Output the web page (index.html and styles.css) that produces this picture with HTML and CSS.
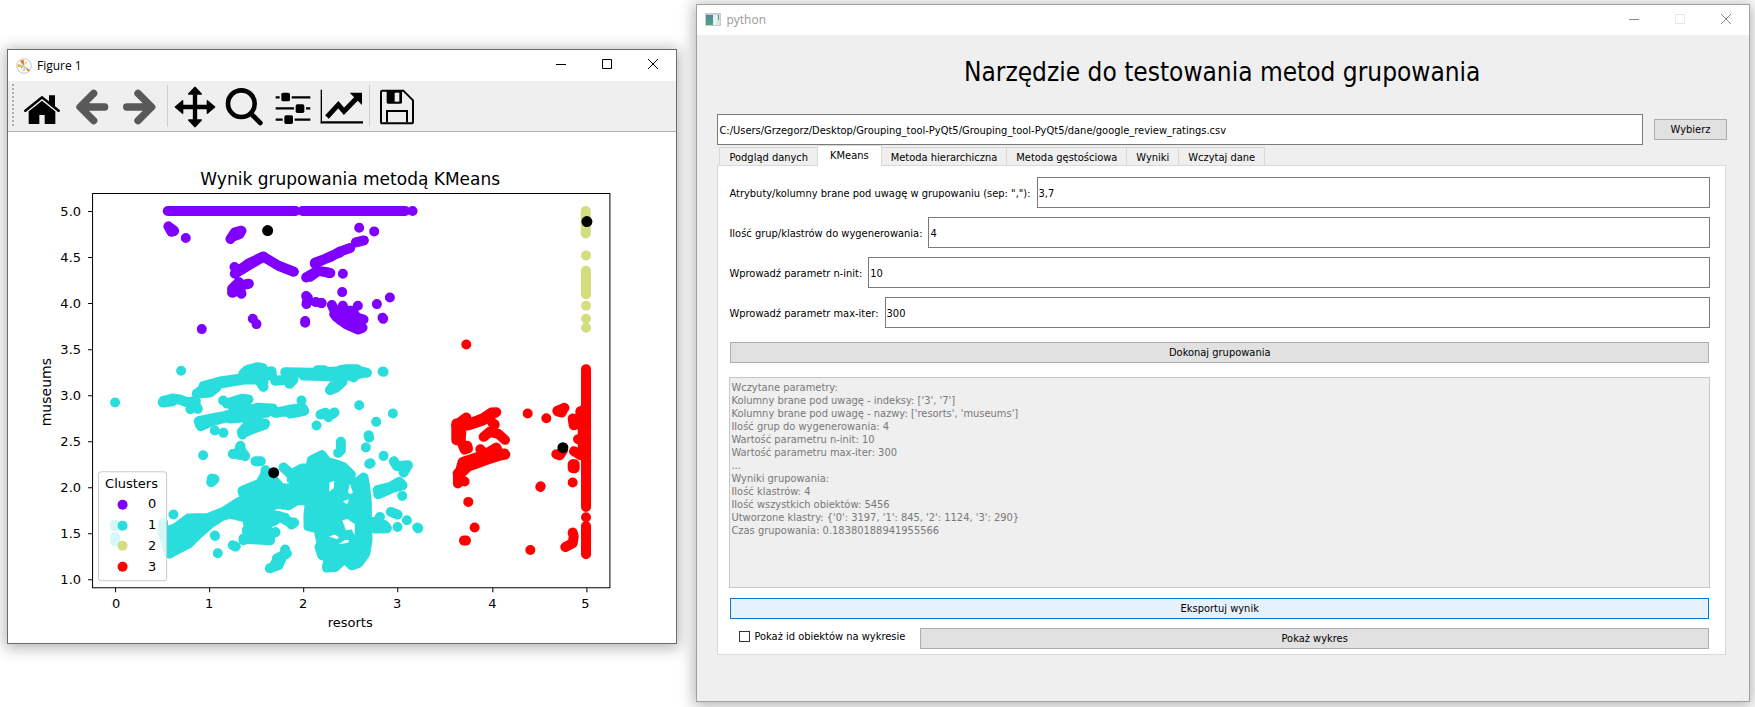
FILE: index.html
```html
<!DOCTYPE html>
<html lang="pl">
<head>
<meta charset="utf-8">
<title>Narzędzie do testowania metod grupowania</title>
<link rel="stylesheet" href="styles.css">
</head>
<body>
<main class="desktop">
  <section class="window figure-window">
    <header class="titlebar">
      <svg class="app-icon" viewBox="0 0 48 48" aria-hidden="true">
        <circle cx="24" cy="24" r="22" fill="#fff" stroke="#c4c8cc" stroke-width="3"/>
        <path d="M4 24h40M24 4v40M10 10l28 28M38 10L10 38" stroke="#dfe3e6" stroke-width="1.5"/>
        <path d="M24 24L12 8l11-3z" fill="#f0641e"/>
        <path d="M24 24L5 28l1-10z" fill="#f5b21a"/>
        <path d="M24 24l13 17 4-5z" fill="#ef6a26"/>
        <path d="M24 24l5-14 4 3z" fill="#b9d46a"/>
        <path d="M24 24l-2 14h5z" fill="#8cc79a"/>
        <path d="M24 24l-8 7-2-3z" fill="#4f9fa8"/>
      </svg>
      <span class="caption">Figure 1</span>
      <button class="control" aria-label="Minimize"><svg viewBox="0 0 10 10"><path d="M0 5.500h10"/></svg></button>
      <button class="control" aria-label="Maximize"><svg viewBox="0 0 10 10"><path d="M.5.5h9v9h-9z"/></svg></button>
      <button class="control" aria-label="Close"><svg viewBox="0 0 10 10"><path d="M0 0l10 10M10 0L0 10"/></svg></button>
    </header>
    <nav class="toolbar" aria-label="Figure tools">
      <span class="grip"></span>
      <button class="tool" aria-label="Home"><svg viewBox="54 123 147 150">
        <path d="M86 214l40-32 40 32v38h-32v-27h-16v27H86z"/>
        <path d="M76 212l50-40 50 40" fill="none" stroke="#efefef" stroke-width="14"/>
        <path d="M147 166h18v34l-18-14z"/>
        <path d="M76 212l50-40 50 40" fill="none" stroke="#000" stroke-width="8" stroke-linecap="round"/></svg></button>
      <button class="tool" aria-label="Back"><svg viewBox="201 123 147 150">
        <path d="M281 160l-41 41 41 41M246 201h68" fill="none" stroke="#595959" stroke-width="22" stroke-linecap="round" stroke-linejoin="round"/></svg></button>
      <button class="tool" aria-label="Forward"><svg viewBox="348 123 147 150">
        <path d="M414 160l41 41-41 41M449 201h-69" fill="none" stroke="#595959" stroke-width="22" stroke-linecap="round" stroke-linejoin="round"/></svg></button>
      <span class="divider"></span>
      <button class="tool" aria-label="Pan"><svg viewBox="513 123 147 150">
        <path d="M585 150v102M536 201h98" fill="none" stroke="#000" stroke-width="13"/>
        <path d="M585 142l19 20h-38zM585 260l19-20h-38zM526 201l22-19v38zM644 201l-22-19v38z" stroke="#000" stroke-width="4" stroke-linejoin="round"/></svg></button>
      <button class="tool" aria-label="Zoom"><svg viewBox="660 123 147 150">
        <circle cx="724" cy="191" r="40" fill="none" stroke="#000" stroke-width="14"/>
        <path d="M754 222l27 27" stroke="#000" stroke-width="14" stroke-linecap="round"/></svg></button>
      <button class="tool" aria-label="Configure subplots"><svg viewBox="807 123 147 150">
        <path d="M827 172h104M827 205h104M827 239h104" stroke="#000" stroke-width="7"/>
        <path d="M839 171h36M882 206h36M848 239h36" stroke="#efefef" stroke-width="12"/>
        <rect x="844" y="158" width="26" height="26" rx="5"/><rect x="887" y="193" width="26" height="26" rx="5"/><rect x="853" y="226" width="26" height="26" rx="5"/></svg></button>
      <button class="tool" aria-label="Edit curves"><svg viewBox="954 123 147 150">
        <path d="M964 149v101" stroke="#000" stroke-width="4"/><path d="M962 247h127" stroke="#000" stroke-width="7"/>
        <path d="M981 231l34-37 17 20 41-42" fill="none" stroke="#000" stroke-width="15"/>
        <path d="M1049 158h37v37z"/></svg></button>
      <span class="divider"></span>
      <button class="tool" aria-label="Save"><svg viewBox="1119 123 147 150">
        <path d="M1147 152h63l29 29v64q0 5-5 5h-87q-4 0-4-5v-89q0-4 4-4z" fill="none" stroke="#000" stroke-width="6"/>
        <path d="M1160 152h46v35q0 4-4 4h-38q-4 0-4-4z"/>
        <path d="M1184 158h14v27h-14z" fill="#efefef"/>
        <path d="M1161 247v-34h60v34" fill="none" stroke="#000" stroke-width="6"/></svg></button>
    </nav>
    <svg class="plot" viewBox="8 132 668 511" role="img" aria-label="Wynik grupowania metodą KMeans">
      <!-- cluster 0 -->
      <g class="c0" transform="translate(30 160) scale(.3333)">
        <path d="M413 153H796M817 153H1125M1147 153h0M415 199l17 13-8 3zM420 205l12 8M467 234h0M601 237l13-20 20-5-6 10-20 8M614 341l41-25 45-26 45 27 46 18M620 336l35-26 45-21M613 321h0M606 398v-12l20-20 5 10 25-5M634 401l-8-25-16 16 20 0M606 398l25-10M828 352l34-20 25 4 13 3M854 308l46-17 30-17 30-10M840 350l22-16M854 311l46-22 30-12M828 408l5 5-4 19M857 426h0M874 429h0M825 483v5M515 507h0M668 476h0M679 492h0"/>
        <path d="M987 203h0M1032 214h0M977 247l24-6M884 335l16 4M938 341h0M936 396h0M874 429h0M905 435h0M938 437h0M983 437h0M1040 432h0M1079 412h0M1057 473l2 3M912 462l15-12 38 2 15 20 20 6M915 466l40 12 42 25-14 5-35-16-30-22M930 480l53 28M938 437v20M905 435l10 20"/>
      </g>
      <!-- cluster 1 -->
      <g class="c1" transform="translate(30 340) scale(.3333)">
        <path d="M255 187h0M453 92h0M398 187l30-12 20 3 25 9 24-5M400 182l28-7M400 187l28-4M481 207h0M503 206l-12-20M500 160l40-3 20-17M505 157l25-17M520 138l50-14 70-10M525 142l45-12 70-12 60 0M640 100l15-12 28-7 15 3-10 30 30-20M635 110l90-5-1-12M650 90l50 35M685 118l15 22M735 122l30-3 15-5M778 131l12-13M765 96l85 2 70-4 60-3 30 7M820 106l100 3 50-4 35-8M862 90h20M930 90l20-3 30 0M970 112h0M937 125l-20 18-17 6 15-20"/>
        <path d="M579 181h0M590 190l45-14 20 2-20 15-30 3 30 25M510 255l-4-12 39-8 40-8 40-12M512 258l30-14 58-15M600 235l60-5 65-20 15 8M620 213l60-8 48 0M600 225l90-22 20 15M680 203l45 2M735 218l45-10 38-4 4 8-42 8M760 215h40M814 181h0M554 271h0M580 278h0M637 283l-2-8 20-23 20-15 28 17-30 10-35 15M655 235v25h25M705 250l-20 10M871 223l14-5 10 13 0-9M885 218l10 12M913 217l-15 10M859 256h0M900 150h0M1057 94l3 1"/>
        <path d="M519 345h0M608 341l17-5 6-19M645 348l-14-20-8 15 20 3M676 363h16M706 390v20l20 10M760 382l20 18 25-5M545 415l8 2-10 9M430 523h0M554 586l1 1M563 639h0M608 615l9 4M736 576h0M987 195h0M1088 220h0M1038 245h0M1015 285l2 7M1007 322h0M932 305v25l-8 8M1060 347h0M1017 371l4-2M1091 363l9 15 33-3-13 22M1042 450l40-10 25-15 10 10-30 8-43 19M1055 450l50-20M1116 467h0M1082 515l20 8M1130 540h0M1102 560h0M1161 562l3 2M1049 530l-14 35 35-1-8-10M1035 565l-5-20"/>
        <path class="mass" d="M405 575L440 562L475 535L535 533L580 515L620 490L645 475L637 452L690 430L707 400L730 420L752 443L785 445L785 402L815 385L840 385L845 360L875 345L890 365L915 372L938 380L962 403L957 425L977 450L985 425L1000 412L1005 440L1010 490L1010 540L1012 600L1005 640L985 668L965 675L945 655L925 670L915 680L890 682L895 660L880 635L872 600L865 565L835 558L835 520L840 480L800 480L775 495L740 490L690 515L640 530L600 520L575 527L540 550L500 585L475 610L440 628L418 640L405 600Z"/>
        <path d="M650 530l60-8 35 5 30 17 17 3-8 6M700 518l65 15M640 600l18-25-5-30 60-10-5 65M640 595l80 5-35-40 50-20M660 595l55-55M650 570l60 15M690 595v-60M705 590l30-14M675 550v40M719 684l25-9 20-39 6 4-30 15M745 675l-10-5M765 628v15M868 620l8 25 20 5"/>
        <path class="hole" d="M750 402l9 18 20 8-14 2-16-14zM898 427l14-5-1 22-14 10zM938 483l18-6-5 15zM936 540l16-4 22 16-1 34-8-18-18 2-4-12zM896 589l18-6 12 8-5 6zM926 611l18-12 12 0-2 8-20 4zM953 456l6-26 9 26-7 6z"/>
        <path d="M255 553v6M255 590v13M397 575l20 55M399 548v20"/>
      </g>
      <!-- cluster 2 -->
      <g class="c2" transform="translate(320 160) scale(.3333)">
        <path d="M796 153v67M797 286h0M797 332v71M797 437h0M797 476h0M797 503h0"/>
      </g>
      <!-- cluster 3 -->
      <g class="c3" transform="translate(320 340) scale(.3333)">
        <path d="M438 13h0M407 255l31-23 5 20 45-18 25-17 15-1-30 14-50 22-40-2M408 300v-45l15 20-2 25 12 28 10-3-2-8M415 270v30M408 262l42-8 40-14 30-20M523 252h0M516 248l7 6M490 290l18-15 26 6 20 18M480 327l15 15 33-20 10 20 15-2M427 365l45-15 20-8 60 0-50 16-60 22-20 20-3-5zM412 400l20-20M413 402v28M433 424h0M440 375l60-19M525 335v15M420 388l60-30 75-15M444 485h0M463 562h0M431 601h6M630 629h0M660 440l1-2M622 220h0M678 234h0M711 212l21-9M712 214l12 3 6-12M708 342l10 3 10-15M757 235l3 20 15-5M780 213v35M773 297h20M761 333l20 12 16-10M757 372l6 12 0-12M757 384v-12M757 427h0M735 620l22-11 3-20-3-12M797 87v413M797 500h0M797 531h0M797 557v85M787 210v135"/>
      </g>
      <!-- centroids -->
      <g class="centroids">
        <circle cx="267.500" cy="230.500" r="5.500"/><circle cx="586.500" cy="221.500" r="5.500"/>
        <circle cx="273.500" cy="472.500" r="5.500"/><circle cx="562.500" cy="447.500" r="5.500"/>
      </g>
      <!-- axes -->
      <path class="axes" d="M92.500 193.500h517v394h-517zM88 211.500h4M88 257.500h4M88 303.500h4M88 349.500h4M88 395.500h4M88 441.500h4M88 487.500h4M88 533.500h4M88 579.500h4M115.500 588v4M209.500 588v4M303.500 588v4M397.500 588v4M492.500 588v4M586.500 588v4"/>
      <text class="plot-title" x="350" y="185">Wynik grupowania metodą KMeans</text>
      <g class="ticks-y">
        <text x="81" y="216">5.0</text><text x="81" y="262">4.5</text><text x="81" y="308">4.0</text>
        <text x="81" y="354">3.5</text><text x="81" y="400">3.0</text><text x="81" y="446">2.5</text>
        <text x="81" y="492">2.0</text><text x="81" y="538">1.5</text><text x="81" y="584">1.0</text>
      </g>
      <g class="ticks-x">
        <text x="116" y="608">0</text><text x="209" y="608">1</text><text x="303" y="608">2</text>
        <text x="397" y="608">3</text><text x="492" y="608">4</text><text x="585" y="608">5</text>
        <text x="350" y="627">resorts</text>
        <text class="axis-name" transform="translate(51 392) rotate(-90)">museums</text>
      </g>
      <g class="legend">
        <rect x="98.500" y="471.500" width="68" height="109" rx="3"/>
        <text x="105" y="488">Clusters</text>
        <circle cx="122.500" cy="504.500" r="5" fill="#8000ff"/><text x="148" y="508">0</text>
        <circle cx="122.500" cy="525.500" r="5" fill="#2adddd"/><text x="148" y="529">1</text>
        <circle cx="122.500" cy="545.500" r="5" fill="#d4dd80"/><text x="148" y="550">2</text>
        <circle cx="122.500" cy="566.500" r="5" fill="#ff0000"/><text x="148" y="571">3</text>
      </g>
    </svg>
  </section>

  <section class="window app-window">
    <header class="titlebar">
      <svg class="app-icon" viewBox="0 0 16 16" aria-hidden="true">
        <defs><linearGradient id="pane" x1="0" y1="0" x2="0" y2="1"><stop offset="0" stop-color="#4c86a5"/><stop offset="1" stop-color="#4fa876"/></linearGradient></defs>
        <path d="M0 1h16v13H0z" fill="#c5ccd0"/><path d="M1 3h7v10H1z" fill="url(#pane)"/>
        <path d="M8 3h4v10H8z" fill="#eceff0"/><path d="M12 3h3v10h-3z" fill="#dde2e3"/><path d="M13 3h1v5h-1z" fill="#4d9693"/>
      </svg>
      <span class="caption">python</span>
      <button class="control" aria-label="Minimalizuj"><svg viewBox="0 0 10 10"><path d="M0 5.500h10"/></svg></button>
      <button class="control" aria-label="Maksymalizuj" disabled><svg viewBox="0 0 10 10"><path d="M.5.5h9v9h-9z"/></svg></button>
      <button class="control" aria-label="Zamknij"><svg viewBox="0 0 10 10"><path d="M0 0l10 10M10 0L0 10"/></svg></button>
    </header>
    <div class="content">
      <h1>Narzędzie do testowania metod grupowania</h1>
      <div class="file-row">
        <input class="field" type="text" aria-label="Plik z danymi" value="C:/Users/Grzegorz/Desktop/Grouping_tool-PyQt5/Grouping_tool-PyQt5/dane/google_review_ratings.csv">
        <button class="button choose">Wybierz</button>
      </div>
      <div class="tabs" role="tablist">
        <button class="tab" role="tab">Podgląd danych</button>
        <button class="tab selected" role="tab" aria-selected="true">KMeans</button>
        <button class="tab" role="tab">Metoda hierarchiczna</button>
        <button class="tab" role="tab">Metoda gęstościowa</button>
        <button class="tab" role="tab">Wyniki</button>
        <button class="tab" role="tab">Wczytaj dane</button>
      </div>
      <div class="panel" role="tabpanel">
        <div class="form-row"><label for="attrs">Atrybuty/kolumny brane pod uwagę w grupowaniu (sep: ","):</label><input class="field" id="attrs" type="text" value="3,7"></div>
        <div class="form-row"><label for="groups">Ilość grup/klastrów do wygenerowania:</label><input class="field" id="groups" type="text" value="4"></div>
        <div class="form-row"><label for="ninit">Wprowadź parametr n-init:</label><input class="field" id="ninit" type="text" value="10"></div>
        <div class="form-row"><label for="maxiter">Wprowadź parametr max-iter:</label><input class="field" id="maxiter" type="text" value="300"></div>
        <button class="button run">Dokonaj grupowania</button>
        <textarea class="log" aria-label="Wyniki grupowania" rows="16" disabled>Wczytane parametry:
Kolumny brane pod uwagę - indeksy: ['3', '7']
Kolumny brane pod uwagę - nazwy: ['resorts', 'museums']
Ilość grup do wygenerowania: 4
Wartość parametru n-init: 10
Wartość parametru max-iter: 300
...
Wyniki grupowania:
Ilość klastrów: 4
Ilość wszystkich obiektów: 5456
Utworzone klastry: {'0': 3197, '1': 845, '2': 1124, '3': 290}
Czas grupowania: 0.18380188941955566</textarea>
        <button class="button export">Eksportuj wynik</button>
        <div class="show-row">
          <label class="check"><input type="checkbox">Pokaż id obiektów na wykresie</label>
          <button class="button">Pokaż wykres</button>
        </div>
      </div>
    </div>
  </section>
</main>
</body>
</html>
```
FILE: styles.css
```css
* { box-sizing: border-box; }
body {
  margin: 0;
  background: #fff;
  color: #000;
  font: 11px/13px "DejaVu Sans Condensed", "Noto Sans", sans-serif;
}
button, input, textarea { font: inherit; color: inherit; margin: 0; }
button { padding: 0; border: 0; background: none; }

.desktop {
  display: flex;
  align-items: flex-start;
  gap: 19px;
  min-height: 100vh;
  padding: 4px 5px 5px 7px;
}
.window { min-width: 0; border: 1px solid #6b6b6b; background: #fff; box-shadow: 0 2px 14px 2px rgba(0, 0, 0, .3); }
.figure-window { flex: 670 1 0; margin-top: 45px; }
.app-window { flex: 1054 1 0; border-color: #a0a0a0; background: #efefef; }

.titlebar { display: flex; align-items: center; height: 31px; padding-left: 8px; background: #fff; }
.app-icon { width: 16px; height: 16px; }
.caption { flex: 1; padding-left: 5px; font: 12px/16px "Open Sans", sans-serif; }
.control { width: 46px; height: 30px; }
.control svg { width: 10px; height: 10px; fill: none; stroke: #000; }
.app-window .titlebar { height: 30px; color: #999; }
.app-window .control svg { stroke: #888; }
.app-window .control:disabled svg { stroke: #e6e6e6; }

.toolbar { display: flex; height: 51px; border-bottom: 1px solid #b4b4b4; background: #efefef; }
.grip { width: 2px; margin: 3px 4px; background: repeating-linear-gradient(#b0b0b0 0 2px, #efefef 2px 4px); }
.divider { width: 1px; margin: 4px 3px 4px 2px; background: #cfcfcf; }
.tool { width: 49px; height: 50px; }
.tool svg { display: block; width: 49px; height: 50px; }

.plot { display: block; width: 100%; font: 14px "DejaVu Sans", sans-serif; }
.plot path { fill: none; stroke-linecap: round; stroke-linejoin: round; }
.c0, .c1, .c2, .c3 { stroke-width: 30; }
.c0 { stroke: #8000ff; }
.c1 { stroke: #2adddd; }
.c2 { stroke: #d4dd80; }
.c3 { stroke: #f00; }
.plot .mass { fill: #2adddd; }
.plot .hole { fill: #fff; stroke: none; }
.plot .axes { stroke: #000; stroke-linecap: butt; stroke-linejoin: miter; }
.plot-title { font-size: 17px; text-anchor: middle; }
.ticks-y, .ticks-x { font-size: 13px; }
.ticks-y { text-anchor: end; }
.ticks-x { text-anchor: middle; }
.axis-name { font-size: 14px; }
.legend { font-size: 13px; }
.legend rect { fill: #fff; fill-opacity: .8; stroke: #ccc; }

.content { padding: 0 22px 46px 20px; }
h1 { margin: 0; padding: 18px 0 23px; font-size: 26px; font-weight: 400; line-height: 38px; text-align: center; }
.field { flex: 1; min-width: 0; height: 31px; padding: 1px 1px 0; border: 1px solid #7a7a7a; background: #fff; }
.button { height: 21px; border: 1px solid #adadad; background: #e1e1e1; text-align: center; }
.file-row { display: flex; align-items: center; gap: 11px; }
.choose { width: 73px; }

.tabs { display: flex; align-items: flex-end; height: 20px; padding-left: 2px; }
.tab { height: 18px; margin-right: -1px; padding: 1px 9px 0; border: 1px solid #d9d9d9; border-bottom: 0; white-space: nowrap; }
.tab.selected { height: 21px; margin-bottom: -1px; padding: 0 12px 1px; background: #fff; z-index: 1; }
.panel { display: flex; flex-direction: column; margin-right: 1px; padding: 11px 15px 5px 11px; border: 1px solid #d9d9d9; background: #fff; }
.form-row { display: flex; align-items: center; gap: 6px; margin-bottom: 9px; }
.form-row label { padding-top: 1px; }
.run { margin: 5px 1px 14px; }
.log { width: 100%; height: 211px; padding: 3px 1px; border: 1px solid #c8c8c8; background: #efefef; color: #787878; resize: none; }
.export { margin: 10px 1px 9px; border-color: #0078d7; background: #e5f1fb; }
.show-row { display: flex; align-items: flex-start; gap: 15px; padding: 0 1px 0 10px; }
.show-row .button { flex: 1; }
.check { display: flex; align-items: center; gap: 4px; padding-top: 2px; }
.check input { appearance: none; width: 11px; height: 11px; border: 1px solid #333; background: #fff; }
```
